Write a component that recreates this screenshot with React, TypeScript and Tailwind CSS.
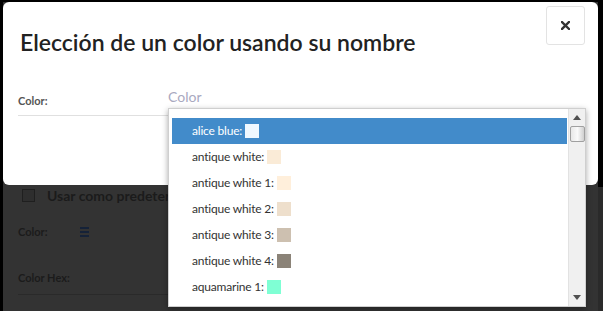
import React from "react";

const items: { name: string; color: string }[] = [
  { name: "alice blue:", color: "#f0f8ff" },
  { name: "antique white:", color: "#faebd7" },
  { name: "antique white 1:", color: "#ffefdb" },
  { name: "antique white 2:", color: "#eedfcc" },
  { name: "antique white 3:", color: "#cdc0b0" },
  { name: "antique white 4:", color: "#8b8378" },
  { name: "aquamarine 1:", color: "#7fffd4" },
  { name: "aquamarine 2:", color: "#76eec6" },
];

export default function App() {
  return (
    <div
      className="relative w-[603px] h-[311px] overflow-hidden bg-[#333333] flex"
      style={{ fontFamily: "Lato, 'Open Sans', sans-serif" }}
    >
      <div className="w-[3px] h-full bg-black" />
      {/* page behind backdrop */}
      <div className="flex-1 h-full flex flex-col">
        <div className="h-[2px] bg-black" />
        <div className="flex-1 flex">
          <div className="flex-1 pt-[184px] pl-[15px]">
            <div className="flex items-center gap-[12px] pl-[4px] h-[18px]">
              <div className="w-[13px] h-[13px] border border-[#1f1f1f] bg-[#2e2e2e]" />
              <span className="text-[14px] font-bold text-[#1b1b1b]">Usar como predeterminado</span>
            </div>
            <div className="flex items-center h-[18px] mt-[19px]">
              <span className="w-[62px] text-[11px] font-bold text-[#1b1b1b]">Color:</span>
              <div className="flex flex-col gap-[2px]">
                <div className="w-[9px] h-[2px] bg-[#152238]" />
                <div className="w-[9px] h-[2px] bg-[#152238]" />
                <div className="w-[9px] h-[2px] bg-[#152238]" />
              </div>
            </div>
            <div className="flex items-center h-[18px] mt-[28px]">
              <span className="text-[11px] font-bold text-[#1b1b1b]">Color Hex:</span>
            </div>
            <div className="mt-[7px] h-px w-[560px] bg-[#2a2a2a]" />
          </div>
          <div className="w-[5px] flex flex-col">
            <div className="h-[185px] bg-black" />
            <div className="flex-1 bg-[#2a2a2a]" />
          </div>
        </div>
      </div>

      {/* modal */}
      <div className="absolute left-[3px] top-[2px] w-[595px] h-[183px] bg-white rounded-[6px]">
        <div className="flex items-start justify-between pl-[17px] pr-[13px] pt-[4px]">
          <h1 className="mt-[21px] text-[23px] leading-[30px] font-semibold text-[#222]">
            Elección de un color usando su nombre
          </h1>
          <button className="w-[39px] h-[39px] flex items-center justify-center rounded-[3px] border border-[#e3e3e3] bg-white">
            <svg width="9" height="9" viewBox="0 0 9 9">
              <path d="M1 1 L8 8 M8 1 L1 8" stroke="#333" strokeWidth="2.4" strokeLinecap="square" />
            </svg>
          </button>
        </div>
        <div className="mx-[15px] mt-[33px] flex items-center h-[26px] border-b border-[#e0e0e0]">
          <span className="w-[150px] text-[11px] font-bold text-[#555] pb-[3px]">Color:</span>
        </div>
      </div>

      {/* select placeholder */}
      <div className="absolute left-[168px] top-[86px] text-[14px] text-[#a9a9bf]">Color</div>

      {/* dropdown */}
      <div className="absolute left-[168px] top-[108px] w-[418px] h-[199px] flex bg-white border border-[#cfcfcf] shadow-[0_2px_6px_rgba(0,0,0,0.35)]">
        <div className="flex-1 overflow-hidden pt-[9px] pl-[3px] pr-[1px]">
          {items.map((it, i) => (
            <div
              key={it.name}
              className={`flex items-center h-[26px] pl-[20px] text-[12px] tracking-[-0.2px] ${
                i === 0 ? "bg-[#428bca] text-white" : "text-[#333]"
              }`}
            >
              <span>{it.name}</span>
              <span className="ml-[3px] w-[14px] h-[14px]" style={{ backgroundColor: it.color }} />
            </div>
          ))}
        </div>
        <div className="w-[17px] h-full flex flex-col items-center bg-[#f0f0f0] border-l border-[#e2e2e2]">
          <div className="h-[17px] flex items-center justify-center">
            <svg width="8" height="5" viewBox="0 0 8 5">
              <path d="M0 5 L4 0 L8 5 Z" fill="#505050" />
            </svg>
          </div>
          <div className="w-[15px] h-[16px] rounded-[2px] border border-[#a0a0a0] bg-gradient-to-r from-[#e8e8e8] via-[#fafafa] to-[#cfcfcf]" />
          <div className="flex-1" />
          <div className="h-[17px] flex items-center justify-center">
            <svg width="8" height="5" viewBox="0 0 8 5">
              <path d="M0 0 L8 0 L4 5 Z" fill="#505050" />
            </svg>
          </div>
        </div>
      </div>
    </div>
  );
}
